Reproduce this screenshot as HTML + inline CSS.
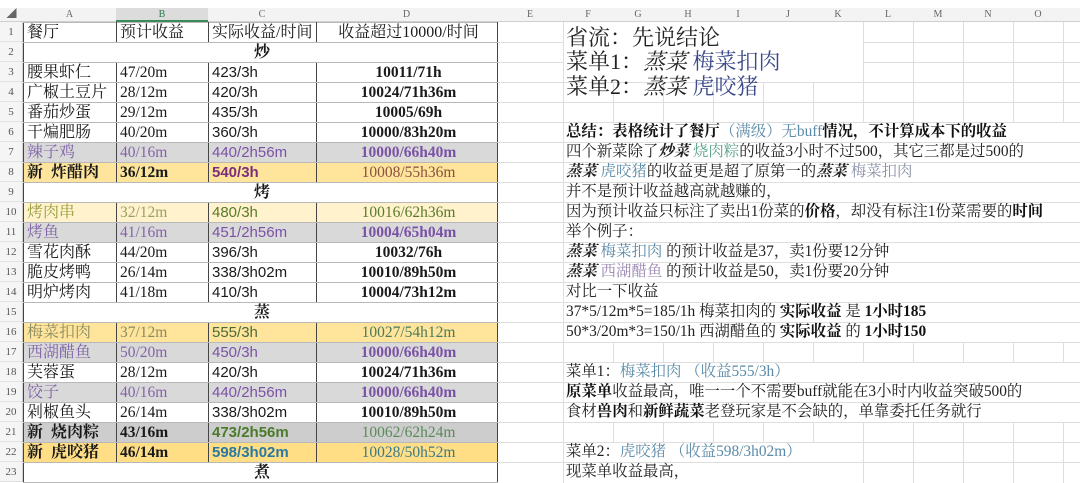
<!DOCTYPE html>
<html><head><meta charset="utf-8">
<style>
*{margin:0;padding:0;box-sizing:border-box}
body{width:1080px;height:483px;overflow:hidden;background:#fff;position:relative;font-family:"Liberation Serif","Noto Serif CJK SC",serif;color:#1a1a1a}
#hdr{position:absolute;left:0;top:8px;width:1080px;height:14px;background:#f3f3f3;border-bottom:1px solid #cfcfcf;font-size:10px;color:#666}
#hdr span{position:absolute;top:0;line-height:14px;text-align:center}
#rn{position:absolute;left:0;top:22px;width:23px;background:#f5f5f5;border-right:1px solid #cfcfcf}
#rn div{height:20px;line-height:20px;font-size:11px;color:#555;text-align:center;border-bottom:1px solid #e2e2e2}
.hl{position:absolute;left:23px;width:1057px;height:1px;background:#dedede}
.vl{position:absolute;top:22px;width:1px;height:461px;background:#dedede}
.mask{position:absolute;background:#fff}
table{position:absolute;left:23px;top:22px;border-collapse:collapse;table-layout:fixed;background:#fff}
td{height:20px;border:1px solid #b8b8b8;border-left:1px solid #444;border-right:1px solid #444;padding:0 0 0 3px;font-size:15.5px;line-height:19px;white-space:nowrap;overflow:hidden}
td.a{font-family:"Liberation Serif","Noto Serif CJK SC",serif;font-size:16px}
td.b{font-family:"Liberation Serif","Noto Serif CJK SC",serif}
td.c{font-family:"Liberation Sans","Noto Sans CJK SC",sans-serif;font-size:15px}
td.d{text-align:center;font-weight:bold;font-family:"Liberation Serif","Noto Serif CJK SC",serif}
td.sec{text-align:center;font-weight:bold;font-size:16px}
.g td{background:#d9d9d9}
.o td{background:#ffe59b}
.y td{background:#fff2cc}
.p{color:#8064a8}
.p2{color:#7a52a6}
.R{position:absolute;left:566px;font-size:15.4px;line-height:20px;white-space:nowrap;font-family:"Liberation Serif","Noto Serif CJK SC",serif;color:#222}
.big{font-size:22px;line-height:24px}
b{font-weight:bold;color:#111}
i{font-style:italic;font-weight:bold}
.bl{color:#3d4a8a}
.lb{color:#5a8aa8}
.gn{color:#5aa08a}
.pv{color:#9a86b0}
.gv{color:#8a90a8}
</style></head><body>
<div id="hdr">
<span style="left:0;width:23px">◢</span>
<span style="left:23px;width:93px">A</span>
<span style="left:116px;width:92px;background:#dcdcdc;color:#2a7a4a;border-bottom:2px solid #3a8a5a;height:14px">B</span>
<span style="left:208px;width:108px">C</span>
<span style="left:316px;width:181px">D</span>
<span style="left:497px;width:66px">E</span>
<span style="left:563px;width:50px">F</span><span style="left:613px;width:50px">G</span><span style="left:663px;width:50px">H</span><span style="left:713px;width:50px">I</span><span style="left:763px;width:50px">J</span><span style="left:813px;width:50px">K</span><span style="left:863px;width:50px">L</span><span style="left:913px;width:50px">M</span><span style="left:963px;width:50px">N</span><span style="left:1013px;width:50px">O</span>
</div>
<div id="rn">
<div>1</div><div>2</div><div>3</div><div>4</div><div>5</div><div>6</div><div>7</div><div>8</div><div>9</div><div>10</div><div>11</div><div>12</div><div>13</div><div>14</div><div>15</div><div>16</div><div>17</div><div>18</div><div>19</div><div>20</div><div>21</div><div>22</div><div>23</div>
</div>
<div class="hl" style="top:42px"></div><div class="hl" style="top:62px"></div><div class="hl" style="top:82px"></div><div class="hl" style="top:102px"></div><div class="hl" style="top:122px"></div><div class="hl" style="top:142px"></div><div class="hl" style="top:162px"></div><div class="hl" style="top:182px"></div><div class="hl" style="top:202px"></div><div class="hl" style="top:222px"></div><div class="hl" style="top:242px"></div><div class="hl" style="top:262px"></div><div class="hl" style="top:282px"></div><div class="hl" style="top:302px"></div><div class="hl" style="top:322px"></div><div class="hl" style="top:342px"></div><div class="hl" style="top:362px"></div><div class="hl" style="top:382px"></div><div class="hl" style="top:402px"></div><div class="hl" style="top:422px"></div><div class="hl" style="top:442px"></div><div class="hl" style="top:462px"></div>
<div class="vl" style="left:563px"></div><div class="vl" style="left:613px"></div><div class="vl" style="left:663px"></div><div class="vl" style="left:713px"></div><div class="vl" style="left:763px"></div><div class="vl" style="left:813px"></div><div class="vl" style="left:863px"></div><div class="vl" style="left:913px"></div><div class="vl" style="left:963px"></div><div class="vl" style="left:1013px"></div><div class="vl" style="left:1063px"></div>
<div class="mask" style="left:564px;top:22px;width:299px;height:60px"></div>
<div class="mask" style="left:564px;top:123px;width:516px;height:19px"></div>
<div class="mask" style="left:564px;top:143px;width:516px;height:19px"></div>
<div class="mask" style="left:564px;top:163px;width:516px;height:19px"></div>
<div class="mask" style="left:564px;top:183px;width:516px;height:19px"></div>
<div class="mask" style="left:564px;top:203px;width:516px;height:19px"></div>
<div class="mask" style="left:564px;top:223px;width:516px;height:19px"></div>
<div class="mask" style="left:564px;top:243px;width:516px;height:19px"></div>
<div class="mask" style="left:564px;top:263px;width:516px;height:19px"></div>
<div class="mask" style="left:564px;top:283px;width:516px;height:19px"></div>
<div class="mask" style="left:564px;top:303px;width:516px;height:19px"></div>
<div class="mask" style="left:564px;top:323px;width:516px;height:19px"></div>
<div class="mask" style="left:564px;top:363px;width:516px;height:19px"></div>
<div class="mask" style="left:564px;top:383px;width:516px;height:19px"></div>
<div class="mask" style="left:564px;top:403px;width:516px;height:19px"></div>
<div class="mask" style="left:564px;top:443px;width:299px;height:19px"></div>
<div class="mask" style="left:564px;top:463px;width:299px;height:20px"></div>

<table>
<colgroup><col style="width:93px"><col style="width:92px"><col style="width:108px"><col style="width:181px"></colgroup>
<tr><td class="a">餐厅</td><td class="a">预计收益</td><td class="a">实际收益/时间</td><td class="a" style="text-align:center">收益超过10000/时间</td></tr>
<tr><td class="sec" colspan="4">炒</td></tr>
<tr><td class="a">腰果虾仁</td><td class="b">47/20m</td><td class="c">423/3h</td><td class="d">10011/71h</td></tr>
<tr><td class="a">广椒土豆片</td><td class="b">28/12m</td><td class="c">420/3h</td><td class="d">10024/71h36m</td></tr>
<tr><td class="a">番茄炒蛋</td><td class="b">29/12m</td><td class="c">435/3h</td><td class="d">10005/69h</td></tr>
<tr><td class="a">干煸肥肠</td><td class="b">40/20m</td><td class="c">360/3h</td><td class="d">10000/83h20m</td></tr>
<tr class="g"><td class="a p">辣子鸡</td><td class="b p">40/16m</td><td class="c p2">440/2h56m</td><td class="d p2">10000/66h40m</td></tr>
<tr class="o"><td class="a" style="font-weight:bold">新&nbsp; 炸醋肉</td><td class="b" style="font-weight:bold">36/12m</td><td class="c" style="font-weight:bold;color:#7a2f7a">540/3h</td><td class="d" style="color:#8a5040;font-weight:normal">10008/55h36m</td></tr>
<tr><td class="sec" colspan="4">烤</td></tr>
<tr class="y"><td class="a" style="color:#9aa040">烤肉串</td><td class="b" style="color:#9aa060">32/12m</td><td class="c" style="color:#5a7a2a">480/3h</td><td class="d" style="color:#5a7a2a;font-weight:normal">10016/62h36m</td></tr>
<tr class="g"><td class="a p">烤鱼</td><td class="b p">41/16m</td><td class="c p2">451/2h56m</td><td class="d p2">10004/65h04m</td></tr>
<tr><td class="a">雪花肉酥</td><td class="b">44/20m</td><td class="c">396/3h</td><td class="d">10032/76h</td></tr>
<tr><td class="a">脆皮烤鸭</td><td class="b">26/14m</td><td class="c">338/3h02m</td><td class="d">10010/89h50m</td></tr>
<tr><td class="a">明炉烤肉</td><td class="b">41/18m</td><td class="c">410/3h</td><td class="d">10004/73h12m</td></tr>
<tr><td class="sec" colspan="4">蒸</td></tr>
<tr class="o"><td class="a" style="color:#8a8a60">梅菜扣肉</td><td class="b" style="color:#8a8a60">37/12m</td><td class="c" style="color:#4a6a3a">555/3h</td><td class="d" style="color:#4a7a5a;font-weight:normal">10027/54h12m</td></tr>
<tr class="g"><td class="a p">西湖醋鱼</td><td class="b p">50/20m</td><td class="c p2">450/3h</td><td class="d p2">10000/66h40m</td></tr>
<tr><td class="a">芙蓉蛋</td><td class="b">28/12m</td><td class="c">420/3h</td><td class="d">10024/71h36m</td></tr>
<tr class="g"><td class="a p">饺子</td><td class="b p">40/16m</td><td class="c p2">440/2h56m</td><td class="d p2">10000/66h40m</td></tr>
<tr><td class="a">剁椒鱼头</td><td class="b">26/14m</td><td class="c">338/3h02m</td><td class="d">10010/89h50m</td></tr>
<tr class="g"><td class="a" style="font-weight:bold;background:#cdcdcd">新&nbsp; 烧肉粽</td><td class="b" style="font-weight:bold;background:#cdcdcd">43/16m</td><td class="c" style="font-weight:bold;color:#4a7a2a;background:#cdcdcd">473/2h56m</td><td class="d" style="color:#5a8a5a;font-weight:normal;background:#cdcdcd">10062/62h24m</td></tr>
<tr class="o"><td class="a" style="font-weight:bold;background:#ffde85">新&nbsp; 虎咬猪</td><td class="b" style="font-weight:bold;background:#ffde85">46/14m</td><td class="c" style="font-weight:bold;color:#2a78a0;background:#ffde85">598/3h02m</td><td class="d" style="color:#3a7a8a;font-weight:normal;background:#ffde85">10028/50h52m</td></tr>
<tr><td class="sec" colspan="4">煮</td></tr>
</table>

<div class="R big" style="top:26px">省流：先说结论</div>
<div class="R big" style="top:50px">菜单1：<i style="font-weight:normal">蒸菜</i> <span class="bl">梅菜扣肉</span></div>
<div class="R big" style="top:75px">菜单2：<i style="font-weight:normal">蒸菜</i> <span class="bl">虎咬猪</span></div>
<div class="R" style="top:122px"><b>总结：表格统计了餐厅</b><span class="lb">（满级）无buff</span><b>情况，不计算成本下的收益</b></div>
<div class="R" style="top:142px">四个新菜除了<i>炒菜</i> <span class="gn">烧肉粽</span>的收益3小时不过500，其它三都是过500的</div>
<div class="R" style="top:162px"><i>蒸菜</i> <span class="lb">虎咬猪</span>的收益更是超了原第一的<i>蒸菜</i> <span class="gv">梅菜扣肉</span></div>
<div class="R" style="top:182px">并不是预计收益越高就越赚的，</div>
<div class="R" style="top:202px">因为预计收益只标注了卖出1份菜的<b>价格</b>，却没有标注1份菜需要的<b>时间</b></div>
<div class="R" style="top:222px">举个例子：</div>
<div class="R" style="top:242px"><i>蒸菜</i> <span class="lb">梅菜扣肉</span> 的预计收益是37，卖1份要12分钟</div>
<div class="R" style="top:262px"><i>蒸菜</i> <span class="pv">西湖醋鱼</span> 的预计收益是50，卖1份要20分钟</div>
<div class="R" style="top:282px">对比一下收益</div>
<div class="R" style="top:302px">37*5/12m*5=185/1h 梅菜扣肉的 <b>实际收益</b> 是 <b>1小时185</b></div>
<div class="R" style="top:322px">50*3/20m*3=150/1h 西湖醋鱼的 <b>实际收益</b> 的 <b>1小时150</b></div>
<div class="R" style="top:362px">菜单1：<span class="lb">梅菜扣肉 （收益555/3h）</span></div>
<div class="R" style="top:382px"><b>原菜单</b>收益最高，唯一一个不需要buff就能在3小时内收益突破500的</div>
<div class="R" style="top:402px">食材<b>兽肉</b>和<b>新鲜蔬菜</b>老登玩家是不会缺的，单靠委托任务就行</div>
<div class="R" style="top:442px">菜单2：<span class="lb">虎咬猪 （收益598/3h02m）</span></div>
<div class="R" style="top:462px">现菜单收益最高，</div>
</body></html>
